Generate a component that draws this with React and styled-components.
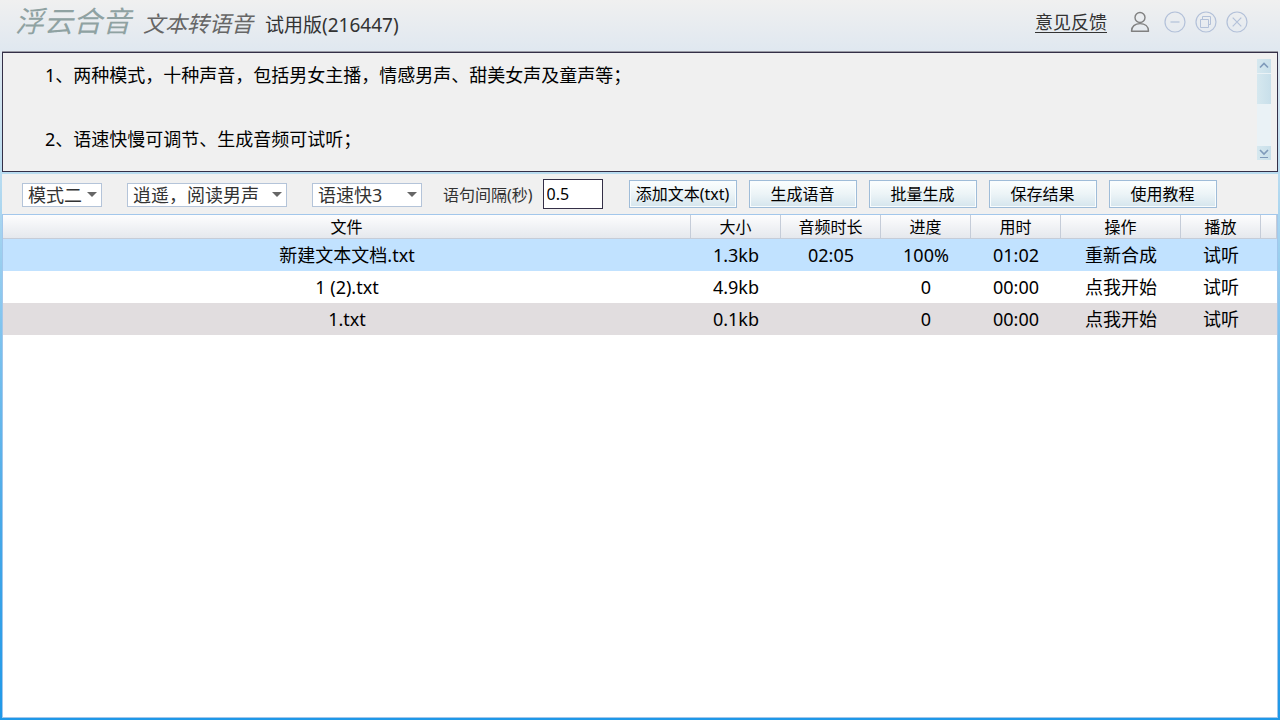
import { useState } from 'react';
import styled, { createGlobalStyle } from 'styled-components';

const GlobalStyle = createGlobalStyle`
    * {
        box-sizing: border-box;
    }

    body {
        margin: 0;
        color: #000;
        font-family: 'Noto Sans', 'Noto Sans CJK SC', sans-serif;
        font-size: 18px;
    }

    button,
    input,
    select {
        font-family: inherit;
    }
`;

const Window = styled.div`
    display: flex;
    flex-direction: column;
    min-height: 100vh;
    padding: 0 2px 2px;
    background: linear-gradient(
        to bottom,
        #f0f0f0 0,
        #e0e8f0 50px,
        #b9dcf0 172px,
        #7cc2ee 340px,
        #48a9e8 520px,
        #1e98e8 100%
    );
`;

const TitleBar = styled.header`
    display: flex;
    align-items: flex-start;
    justify-content: space-between;
    height: 51px;
    padding: 0 30px 0 13px;
`;

const Brand = styled.div`
    display: flex;
    align-items: baseline;
    gap: 12px;
    line-height: 42px;
`;

const Logo = styled.h1`
    margin: 0;
    color: #8fa2a2;
    font-size: 29px;
    font-style: italic;
    font-weight: 400;
`;

const Subtitle = styled.span`
    color: #666;
    font-size: 22px;
    font-style: italic;
`;

const Version = styled.span`
    color: #333;
    font-size: 19px;
`;

const Actions = styled.div`
    display: flex;
    align-items: center;
    gap: 9px;
    height: 44px;
`;

const Feedback = styled.a`
    margin-right: 14px;
    padding-bottom: 2px;
    color: #333;
    text-decoration: underline;
    text-decoration-thickness: 1px;
    text-underline-offset: 3px;
`;

const IconButton = styled.button`
    display: block;
    padding: 0;
    border: 0;
    background: none;
    line-height: 0;
`;

const UserButton = styled(IconButton)`
    margin-right: 5px;
`;

const Notice = styled.section`
    display: flex;
    justify-content: space-between;
    height: 120px;
    padding: 6px 6px 11px 42px;
    border: 1px solid #342f47;
    background: #f0f0f0;
    box-shadow: 0 -1px #9a9ba5;
    margin-top: 1px;
`;

const NoticeText = styled.div`
    line-height: 32px;

    p {
        margin: 0 0 32px;
    }
`;

const ScrollBar = styled.div`
    display: flex;
    flex-direction: column;
    width: 14px;
    background: #eaf2f6;
`;

const ScrollButton = styled.button`
    height: 14px;
    padding: 0;
    border: 0;
    background: linear-gradient(to right, #d6e8ef, #c8dfea);
    line-height: 0;
`;

const ScrollThumb = styled.div`
    height: 30px;
    margin: 1px 0 auto;
    background: linear-gradient(to right, #d6e8ef, #c8dfea);
`;

const Toolbar = styled.div`
    display: flex;
    align-items: center;
    height: 40px;
    margin-top: 2px;
    padding: 0 20px;
    background: #f0f0f0;
`;

const Options = styled.div`
    display: flex;
    gap: 25px;
    margin-right: 21px;
    padding-top: 2px;
`;

const SelectBox = styled.div`
    position: relative;
    width: ${({ $width }) => $width}px;

    svg {
        position: absolute;
        top: 9px;
        right: 5px;
        pointer-events: none;
    }
`;

const Select = styled.select`
    display: block;
    width: 100%;
    height: 24px;
    padding: 0 5px;
    border: 1px solid #b4c4d9;
    border-radius: 0;
    background: #fff;
    color: #333;
    font-size: 18px;
    line-height: 22px;
    appearance: none;
`;

const IntervalLabel = styled.label`
    margin-right: 10px;
    color: #333;
    font-size: 16px;
`;

const IntervalInput = styled.input`
    width: 60px;
    height: 30px;
    padding: 0 3px;
    border: 1px solid #342f47;
    border-radius: 0;
    background: #fff;
    color: #000;
    font-size: 16px;
`;

const Buttons = styled.div`
    display: flex;
    gap: 12px;
    margin-left: 26px;
`;

const Button = styled.button`
    width: 108px;
    height: 28px;
    padding: 0 0 2px;
    border: 1px solid #9fbcd8;
    background: linear-gradient(to bottom, #fbfefe, #ecf4f7 50%, #d5e5ed);
    box-shadow: inset 0 0 0 1px #f9fdfe;
    color: #000;
    font-size: 16px;
    white-space: nowrap;
`;

const Files = styled.main`
    flex: 1;
    border: 1px solid #a3c7eb;
    background: #fff;
`;

const Table = styled.table`
    width: 100%;
    border-collapse: separate;
    border-spacing: 0;
    table-layout: fixed;
`;

const HeadCell = styled.th`
    width: ${({ $width }) => ($width ? `${$width}px` : 'auto')};
    height: 24px;
    padding: 0;
    border-right: 1px solid #c5ccd8;
    border-bottom: 1px solid #c5ccd8;
    background: linear-gradient(to bottom, #fdfdfe, #e5e8ed);
    font-size: 16px;
    font-weight: 400;
    line-height: 22px;
`;

const rowColors = {
    selected: '#c1e2ff',
    odd: '#e1dddf',
};

const Row = styled.tr`
    background: ${({ $tone }) => rowColors[$tone] || '#fff'};
`;

const Cell = styled.td`
    height: 32px;
    padding: 0;
    line-height: 28px;
    text-align: center;
`;

const CellButton = styled.button`
    padding: 0;
    border: 0;
    background: none;
    color: inherit;
    font-size: 18px;
    line-height: 28px;
`;

const columns = [
    { name: '文件' },
    { name: '大小', width: 90 },
    { name: '音频时长', width: 100 },
    { name: '进度', width: 90 },
    { name: '用时', width: 90 },
    { name: '操作', width: 120 },
    { name: '播放', width: 80 },
    { name: '', width: 16 },
];

const files = [
    {
        name: '新建文本文档.txt',
        size: '1.3kb',
        duration: '02:05',
        progress: '100%',
        elapsed: '01:02',
        action: '重新合成',
        tone: 'selected',
    },
    {
        name: '1 (2).txt',
        size: '4.9kb',
        duration: '',
        progress: '0',
        elapsed: '00:00',
        action: '点我开始',
    },
    {
        name: '1.txt',
        size: '0.1kb',
        duration: '',
        progress: '0',
        elapsed: '00:00',
        action: '点我开始',
        tone: 'odd',
    },
];

const CircleIcon = ({ children }) => (
    <svg width="22" height="22" viewBox="0 0 22 22" fill="none" stroke="#b3c1d9">
        <circle cx="11" cy="11" r="10" strokeWidth="1.2" />
        {children}
    </svg>
);

const UserIcon = () => (
    <svg width="20" height="22" viewBox="0 0 20 22" fill="none" stroke="#808080" strokeWidth="1.4">
        <circle cx="10" cy="6.5" r="5" />
        <path d="M1.5 20.2C1.5 15.5 5 12.6 10 12.6s8.5 2.9 8.5 7.6z" strokeLinejoin="round" />
    </svg>
);

const Dropdown = ({ label, width, options }) => (
    <SelectBox $width={width}>
        <Select aria-label={label}>
            {options.map((option) => (
                <option key={option}>{option}</option>
            ))}
        </Select>
        <svg width="10" height="5" viewBox="0 0 10 5">
            <path d="M0 0h10L5 5z" fill="#666" />
        </svg>
    </SelectBox>
);

export default () => {
    const [interval, setInterval] = useState('0.5');

    return (
        <Window>
            <GlobalStyle />
            <TitleBar>
                <Brand>
                    <Logo>浮云合音</Logo>
                    <Subtitle>文本转语音</Subtitle>
                    <Version>试用版(216447)</Version>
                </Brand>
                <Actions>
                    <Feedback href="#feedback">意见反馈</Feedback>
                    <UserButton aria-label="用户">
                        <UserIcon />
                    </UserButton>
                    <IconButton aria-label="最小化">
                        <CircleIcon>
                            <path d="M6.5 11h9" strokeWidth="1.2" />
                        </CircleIcon>
                    </IconButton>
                    <IconButton aria-label="最大化">
                        <CircleIcon>
                            <path d="M5.5 8.5h8v8h-8zM7.5 8.5v-3h8v8h-2" />
                        </CircleIcon>
                    </IconButton>
                    <IconButton aria-label="关闭">
                        <CircleIcon>
                            <path d="M6.7 6.7l8.6 8.6M15.3 6.7l-8.6 8.6" strokeWidth="1.2" />
                        </CircleIcon>
                    </IconButton>
                </Actions>
            </TitleBar>
            <Notice>
                <NoticeText>
                    <p>1、两种模式，十种声音，包括男女主播，情感男声、甜美女声及童声等；</p>
                    <p>2、语速快慢可调节、生成音频可试听；</p>
                </NoticeText>
                <ScrollBar>
                    <ScrollButton aria-label="向上">
                        <svg width="14" height="14" fill="none" stroke="#7f9aba" strokeWidth="1.6">
                            <path d="M3 8.5l4-4 4 4" />
                        </svg>
                    </ScrollButton>
                    <ScrollThumb />
                    <ScrollButton aria-label="向下">
                        <svg width="14" height="14" fill="none" stroke="#7f9aba" strokeWidth="1.6">
                            <path d="M3 4l4 4 4-4" />
                            <path d="M3 11.5h8" strokeWidth="1" />
                        </svg>
                    </ScrollButton>
                </ScrollBar>
            </Notice>
            <Toolbar>
                <Options>
                    <Dropdown label="模式" width={80} options={['模式二']} />
                    <Dropdown label="声音" width={160} options={['逍遥，阅读男声']} />
                    <Dropdown label="语速" width={110} options={['语速快3']} />
                </Options>
                <IntervalLabel htmlFor="interval">语句间隔(秒)</IntervalLabel>
                <IntervalInput
                    id="interval"
                    value={interval}
                    onChange={(e) => setInterval(e.target.value)}
                />
                <Buttons>
                    <Button>添加文本(txt)</Button>
                    <Button>生成语音</Button>
                    <Button>批量生成</Button>
                    <Button>保存结果</Button>
                    <Button>使用教程</Button>
                </Buttons>
            </Toolbar>
            <Files>
                <Table>
                    <thead>
                        <tr>
                            {columns.map(({ name, width }) => (
                                <HeadCell key={name} $width={width}>
                                    {name}
                                </HeadCell>
                            ))}
                        </tr>
                    </thead>
                    <tbody>
                        {files.map((file) => (
                            <Row key={file.name} $tone={file.tone}>
                                <Cell>{file.name}</Cell>
                                <Cell>{file.size}</Cell>
                                <Cell>{file.duration}</Cell>
                                <Cell>{file.progress}</Cell>
                                <Cell>{file.elapsed}</Cell>
                                <Cell>
                                    <CellButton>{file.action}</CellButton>
                                </Cell>
                                <Cell>
                                    <CellButton>试听</CellButton>
                                </Cell>
                                <Cell />
                            </Row>
                        ))}
                    </tbody>
                </Table>
            </Files>
        </Window>
    );
};
